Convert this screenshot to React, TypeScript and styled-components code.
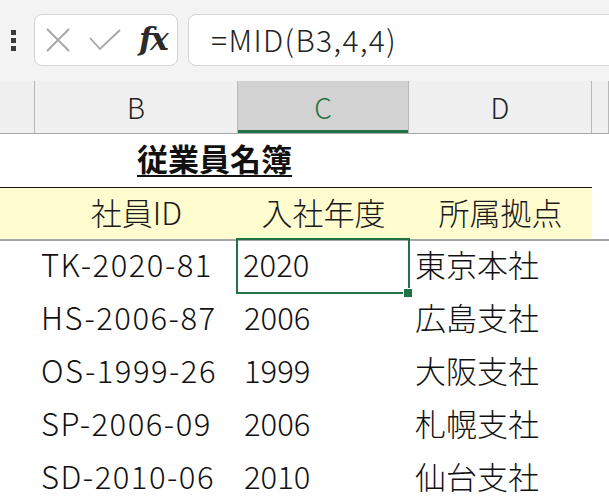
import React from "react";
import styled, { createGlobalStyle } from "styled-components";

const Global = createGlobalStyle`
  html, body { margin: 0; padding: 0; background: #ffffff; }
  body { font-family: "Noto Sans CJK JP", "Noto Sans", sans-serif; overflow: hidden; }
`;

const COLS = "35px 203px 171px 183px 1fr";

const Page = styled.div`
  width: 609px;
  height: 500px;
  overflow: hidden;
  background: #fff;
`;

const TopBar = styled.div`
  height: 81px;
  background: #f3f3f3;
  display: flex;
  align-items: flex-start;
  padding-top: 14px;
  box-sizing: border-box;
`;

const Dots = styled.div`
  width: 34px;
  height: 52px;
  display: flex;
  flex-direction: column;
  align-items: center;
  justify-content: center;
  gap: 3px;
  padding-right: 8px;
  box-sizing: border-box;
  span {
    width: 5px;
    height: 5px;
    background: #3a3a3a;
  }
`;

const ButtonBox = styled.div`
  width: 144px;
  height: 52px;
  box-sizing: border-box;
  background: #fff;
  border: 1px solid #d4d4d4;
  border-radius: 8px;
  display: flex;
  align-items: center;
  padding-left: 10px;
  gap: 18px;
`;

const Fx = styled.span`
  font-family: "DejaVu Serif", "Liberation Serif", serif;
  font-style: italic;
  font-weight: bold;
  font-size: 31px;
  color: #2b2b2b;
  letter-spacing: -2px;
  margin-top: -2px;
`;

const FormulaBox = styled.div`
  flex: 1;
  height: 52px;
  margin-left: 10px;
  margin-right: -20px;
  box-sizing: border-box;
  background: #fff;
  border: 1px solid #d4d4d4;
  border-radius: 8px;
  display: flex;
  align-items: center;
  padding-left: 22px;
  padding-bottom: 2px;
  font-size: 30px;
  font-weight: 300;
  letter-spacing: 1.4px;
  color: #222;
`;

const ColHeader = styled.div`
  display: grid;
  grid-template-columns: ${COLS};
  height: 52px;
  background: #f0f0f0;
  border-bottom: 1px solid #a8a8a8;
`;

const ColCell = styled.div<{ $active?: boolean }>`
  display: flex;
  align-items: center;
  justify-content: center;
  font-size: 28px;
  font-weight: 300;
  color: ${(p) => (p.$active ? "#217346" : "#222")};
  background: ${(p) => (p.$active ? "#d2d2d2" : "transparent")};
  border-right: 1px solid #b8b8b8;
  box-shadow: ${(p) => (p.$active ? "inset 0 -3px 0 #217346" : "none")};
  box-sizing: border-box;
`;

const Row = styled.div<{ $h?: number }>`
  display: grid;
  grid-template-columns: ${COLS};
  height: ${(p) => p.$h ?? 53}px;
`;

const TitleCell = styled.div`
  grid-column: 2 / span 2;
  display: flex;
  align-items: center;
  padding-left: 102px;
  padding-bottom: 6px;
  font-size: 31px;
  font-weight: bold;
  color: #111;
  text-decoration: underline;
  text-underline-offset: 4px;
  text-decoration-thickness: 2px;
`;

const HeadRow = styled.div`
  display: grid;
  grid-template-columns: ${COLS};
  height: 54px;
  border-bottom: 2px solid #a6a6a6;
  box-sizing: border-box;
`;

const HeadCell = styled.div<{ $blank?: boolean }>`
  background: ${(p) => (p.$blank ? "#fff" : "#fffdcf")};
  border-top: ${(p) => (p.$blank ? "none" : "1.5px solid #111")};
  display: flex;
  align-items: center;
  justify-content: center;
  font-size: 31px;
  font-weight: 300;
  color: #1a1a1a;
  box-sizing: border-box;
  padding-bottom: 4px;
`;

const Cell = styled.div<{ $pad?: number; $spread?: boolean }>`
  display: flex;
  align-items: center;
  padding-left: ${(p) => p.$pad ?? 5}px;
  padding-bottom: 8px;
  font-size: 31px;
  font-weight: 300;
  letter-spacing: ${(p) => (p.$spread ? "1.5px" : "0")};
  color: #111;
  white-space: nowrap;
  position: relative;
`;

const Selected = styled(Cell)`
  &::after {
    content: "";
    position: absolute;
    left: -2px;
    right: -1px;
    top: -3px;
    bottom: 0;
    border: 2px solid #217346;
  }
`;

const Handle = styled.span`
  position: absolute;
  right: -4px;
  bottom: -4px;
  width: 8px;
  height: 8px;
  background: #217346;
  border: 1px solid #fff;
  z-index: 2;
`;

const rows = [
  ["TK-2020-81", "2020", "東京本社"],
  ["HS-2006-87", "2006", "広島支社"],
  ["OS-1999-26", "1999", "大阪支社"],
  ["SP-2006-09", "2006", "札幌支社"],
  ["SD-2010-06", "2010", "仙台支社"],
];

export default function App() {
  return (
    <Page>
      <Global />
      <TopBar>
        <Dots>
          <span />
          <span />
          <span />
        </Dots>
        <ButtonBox>
          <svg width="26" height="26" viewBox="0 0 26 26">
            <path d="M2 2 L24 24 M24 2 L2 24" stroke="#a6a6a6" strokeWidth="1.8" fill="none" />
          </svg>
          <svg width="32" height="22" viewBox="0 0 32 22">
            <path d="M1 9 L11 20 L31 1" stroke="#a6a6a6" strokeWidth="1.8" fill="none" />
          </svg>
          <Fx>fx</Fx>
        </ButtonBox>
        <FormulaBox>=MID(B3,4,4)</FormulaBox>
      </TopBar>
      <ColHeader>
        <ColCell />
        <ColCell>B</ColCell>
        <ColCell $active>C</ColCell>
        <ColCell>D</ColCell>
        <ColCell />
      </ColHeader>
      <Row $h={53}>
        <TitleCell>従業員名簿</TitleCell>
      </Row>
      <HeadRow>
        <HeadCell />
        <HeadCell>社員ID</HeadCell>
        <HeadCell>入社年度</HeadCell>
        <HeadCell>所属拠点</HeadCell>
        <HeadCell $blank />
      </HeadRow>
      {rows.map((r, i) => (
        <Row key={i}>
          <Cell />
          <Cell $pad={6} $spread>
            {r[0]}
          </Cell>
          {i === 0 ? (
            <Selected $pad={5}>
              {r[1]}
              <Handle />
            </Selected>
          ) : (
            <Cell $pad={6}>{r[1]}</Cell>
          )}
          <Cell $pad={6}>{r[2]}</Cell>
          <Cell />
        </Row>
      ))}
    </Page>
  );
}
